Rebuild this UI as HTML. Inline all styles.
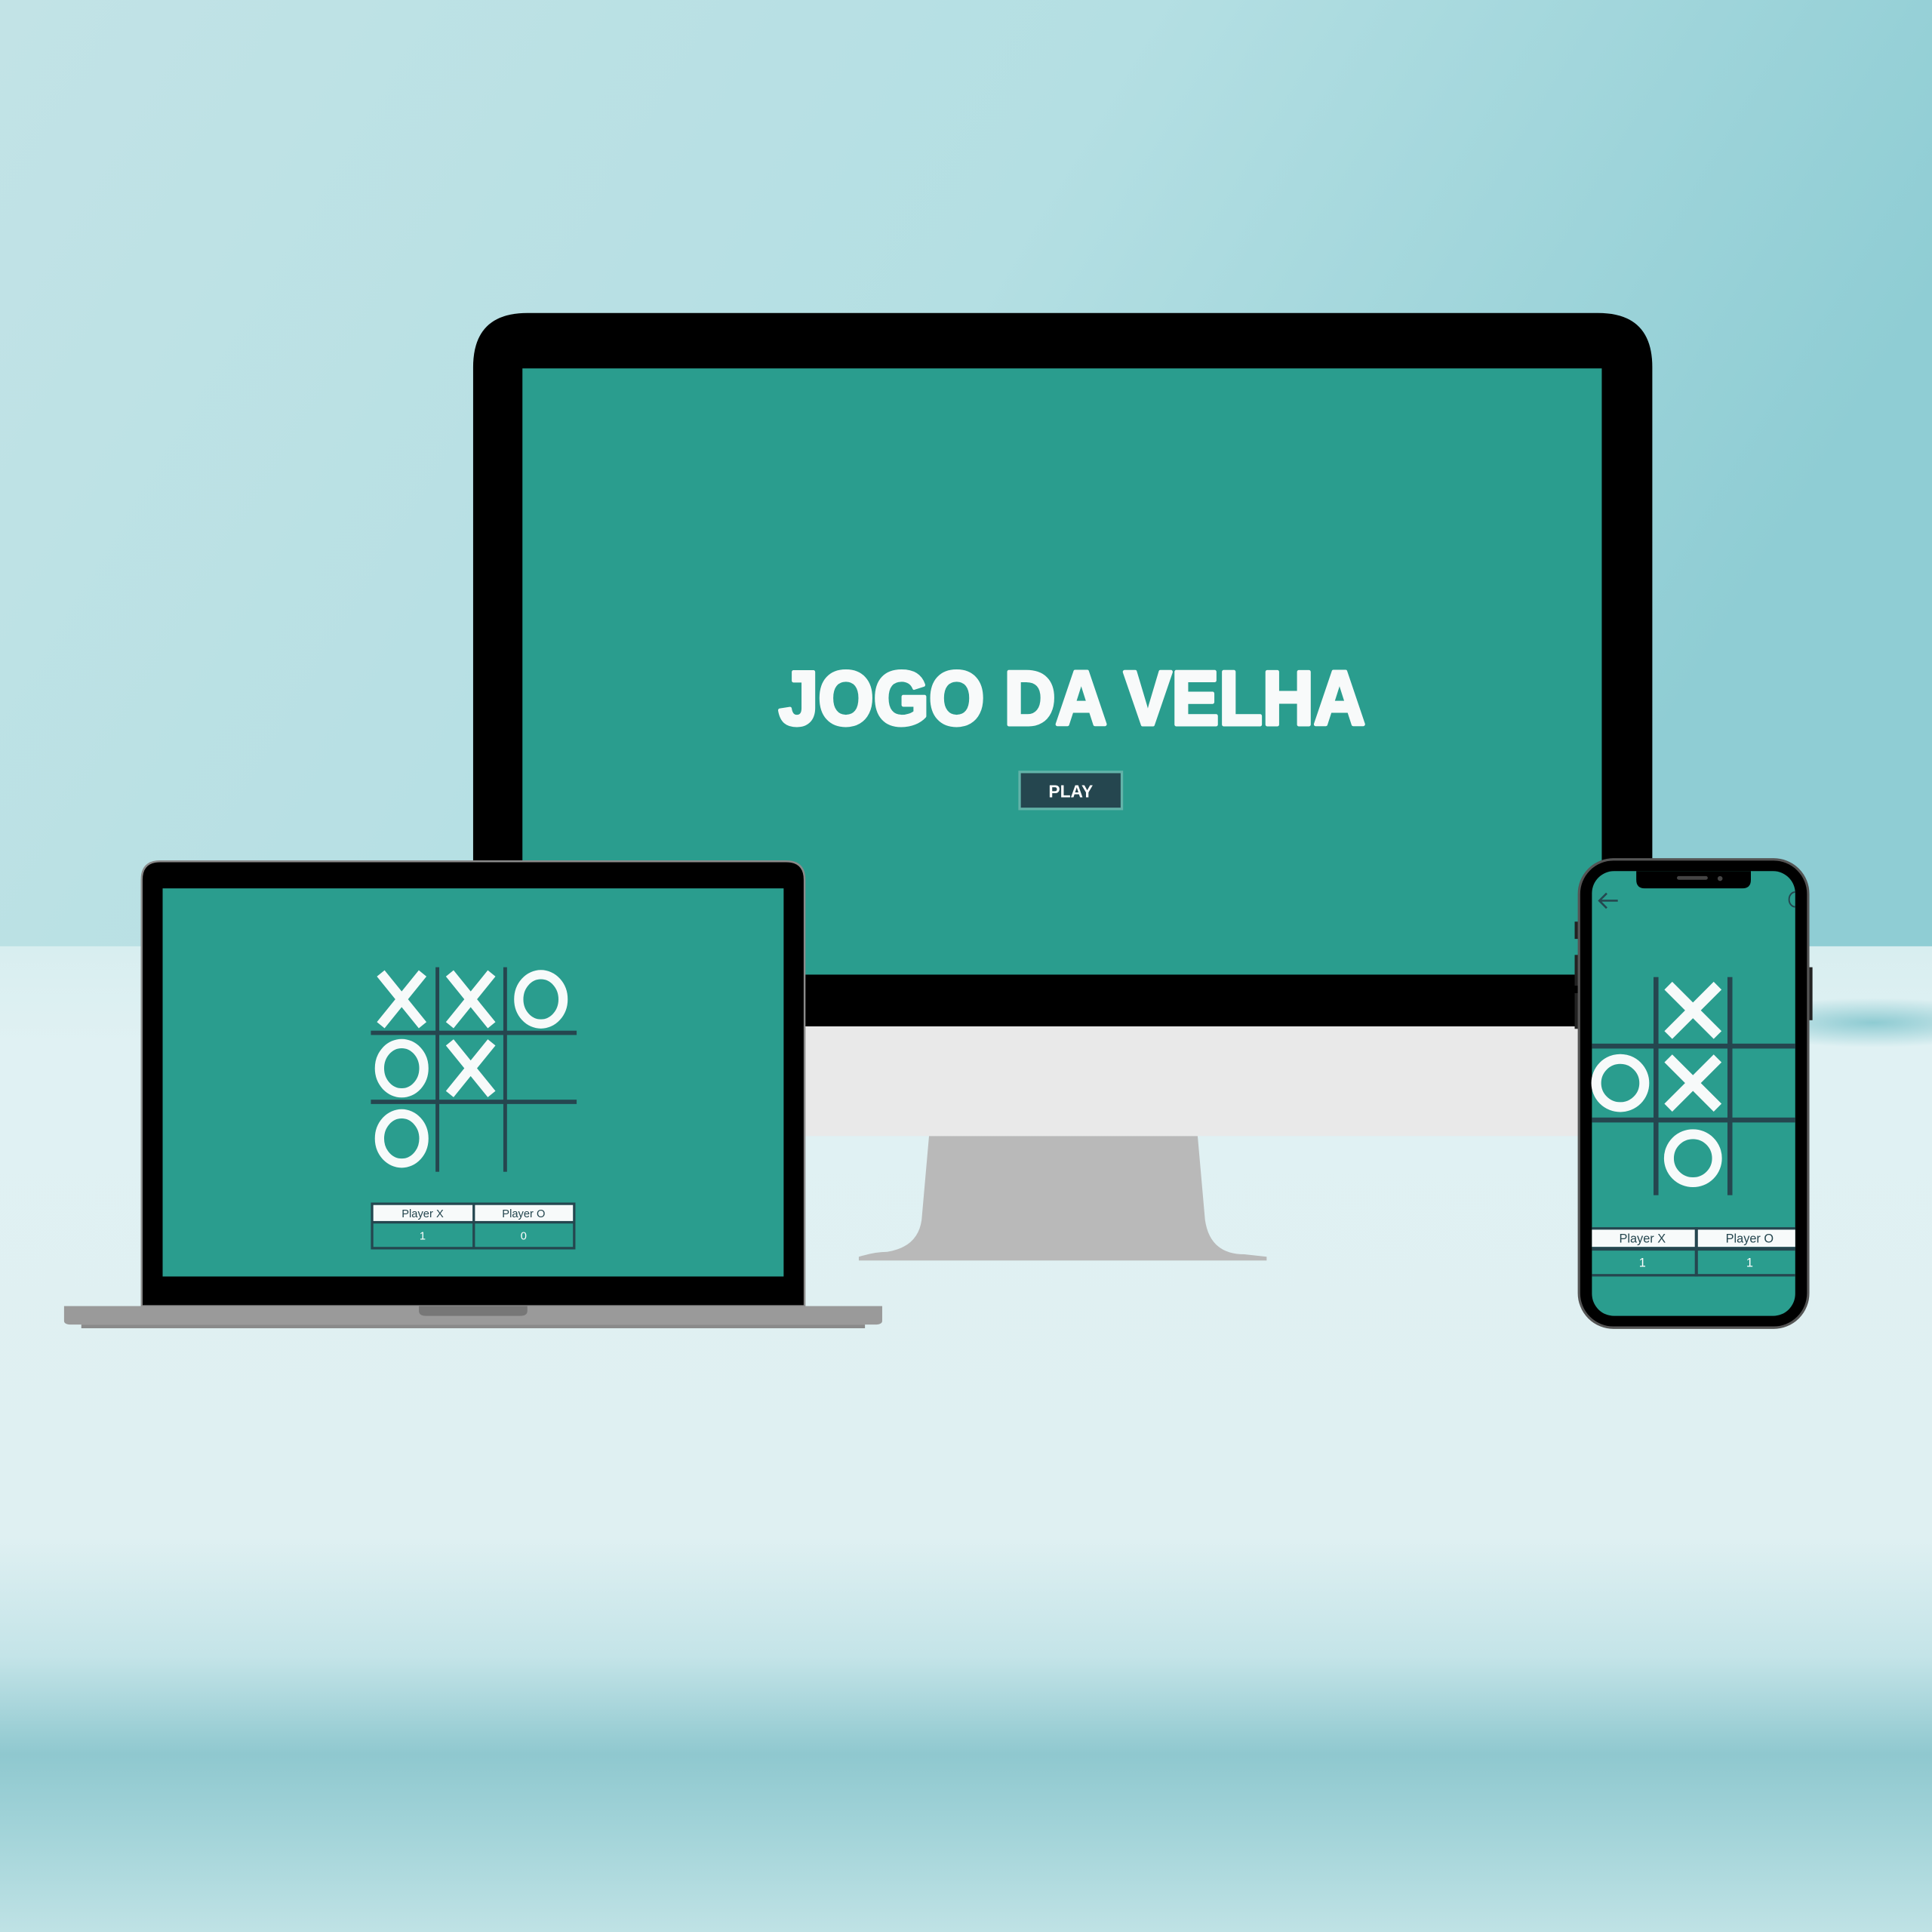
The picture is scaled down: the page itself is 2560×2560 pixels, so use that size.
<!DOCTYPE html>
<html><head><meta charset="utf-8"><style>html,body{margin:0;padding:0;width:2560px;height:2560px;overflow:hidden}svg{display:block}</style></head>
<body>
<svg width="2560" height="2560" viewBox="0 0 1568 1568" xmlns="http://www.w3.org/2000/svg">
<defs>
<linearGradient id="top" x1="0" y1="0" x2="1" y2="0.3"><stop offset="0" stop-color="#c2e3e6"/><stop offset="0.55" stop-color="#b4dfe3"/><stop offset="1" stop-color="#8fcdd4"/></linearGradient>
<linearGradient id="bot" x1="0" y1="0" x2="0" y2="1">
<stop offset="0" stop-color="#d8eef0"/><stop offset="0.1" stop-color="#e0f1f3"/><stop offset="0.6" stop-color="#dff0f2"/><stop offset="0.72" stop-color="#c4e4e8"/><stop offset="0.82" stop-color="#8fc8cf"/><stop offset="0.9" stop-color="#a3d4d9"/><stop offset="1" stop-color="#bfe2e5"/></linearGradient>
<radialGradient id="streak" cx="0.5" cy="0.5" r="0.5"><stop offset="0" stop-color="#8ecbd2"/><stop offset="1" stop-color="#8ecbd2" stop-opacity="0"/></radialGradient>
<g id="xl"><path d="M-17,-21L17,21M17,-21L-17,21" stroke="#f7fafa" stroke-width="8"/></g>
<g id="ol"><ellipse rx="18" ry="20" fill="none" stroke="#f7fafa" stroke-width="7.5"/></g>
<g id="xp"><path d="M-20,-20L20,20M20,-20L-20,20" stroke="#f7fafa" stroke-width="9"/></g>
<g id="op"><circle r="19.5" fill="none" stroke="#f7fafa" stroke-width="8"/></g>
</defs>
<rect width="1568" height="780" fill="url(#top)"/>
<rect y="768" width="1568" height="800" fill="url(#bot)"/>
<ellipse cx="1520" cy="830" rx="120" ry="20" fill="url(#streak)"/>

<!-- monitor -->
<path d="M754,922 L972,922 L978,990 Q982,1018 1010,1018 L1028,1020 L1028,1023 L697,1023 L697,1020 Q710,1016 720,1016 Q745,1012 748,990 Z" fill="#b9b9b9"/>
<rect x="384" y="833" width="957" height="89" fill="#e9e9e9"/>
<path d="M384,833 L384,298 Q384,254 428,254 L1297,254 Q1341,254 1341,298 L1341,833 Z" fill="#000"/>
<rect x="424" y="299" width="876" height="492" fill="#2a9d8e"/>
<text x="870" y="588" text-anchor="middle" textLength="476" lengthAdjust="spacingAndGlyphs" font-family="'Liberation Sans',sans-serif" font-weight="bold" font-size="62" fill="#f8fafa" stroke="#f8fafa" stroke-width="3" stroke-linejoin="round">JOGO DA VELHA</text>
<rect x="827.5" y="626.5" width="83" height="30" fill="#25464f" stroke="#62b3a9" stroke-width="2"/>
<text x="869" y="647" text-anchor="middle" font-family="'Liberation Sans',sans-serif" font-weight="bold" font-size="14" fill="#fff">PLAY</text>

<!-- laptop -->
<path d="M115,1060 L115,714 Q115,699 130,699 L638,699 Q653,699 653,714 L653,1060 Z" fill="#000" stroke="#8a8a8a" stroke-width="1.5"/>
<rect x="132" y="721" width="504" height="315" fill="#2a9d8e"/>
<path d="M52,1060 L716,1060 L716,1072 Q716,1075 710,1075 L58,1075 Q52,1075 52,1072 Z" fill="#9a9a9a"/>
<rect x="66" y="1075" width="636" height="3" fill="#8a8a8a"/>
<path d="M340,1060 L428,1060 L428,1064 Q428,1068 422,1068 L346,1068 Q340,1068 340,1064 Z" fill="#777"/>
<g fill="#25464f">
<rect x="353.5" y="785" width="3" height="166"/><rect x="408.5" y="785" width="3" height="166"/>
<rect x="301" y="836.5" width="167" height="3.5"/><rect x="301" y="892.5" width="167" height="3.5"/>
</g>
<use href="#xl" x="326" y="811"/><use href="#xl" x="382" y="811"/><use href="#ol" x="439" y="811"/>
<use href="#ol" x="326" y="867"/><use href="#xl" x="382" y="867"/>
<use href="#ol" x="326" y="924"/>
<rect x="302" y="977" width="164" height="36" fill="#2a9d8e" stroke="#25464f" stroke-width="2"/>
<rect x="303" y="978" width="162" height="13" fill="#f7fafa"/>
<rect x="302" y="991" width="164" height="2" fill="#25464f"/>
<rect x="383.5" y="977" width="2" height="36" fill="#25464f"/>
<g font-family="'Liberation Sans',sans-serif" font-size="9" text-anchor="middle">
<text x="343" y="988" fill="#25464f">Player X</text><text x="425" y="988" fill="#25464f">Player O</text>
<text x="343" y="1006" fill="#fff">1</text><text x="425" y="1006" fill="#fff">0</text></g>

<!-- phone -->
<rect x="1278" y="748" width="3" height="14" fill="#222"/><rect x="1278" y="775" width="3" height="25" fill="#222"/><rect x="1278" y="806" width="3" height="29" fill="#222"/>
<rect x="1467" y="785" width="4" height="43" fill="#222"/>
<rect x="1281.5" y="697.5" width="186" height="380" rx="28" fill="#000" stroke="#555" stroke-width="2"/>
<rect x="1292" y="707" width="165" height="361" rx="18" fill="#2a9d8e"/>
<path d="M1328,707 L1421,707 L1421,714 Q1421,721 1414,721 L1335,721 Q1328,721 1328,714 Z" fill="#000"/>
<rect x="1361" y="711" width="25" height="3" rx="1.5" fill="#444"/><circle cx="1396" cy="713" r="2" fill="#444"/>
<path d="M1313,731 L1298,731 M1304,725 L1298,731 L1304,737" stroke="#25464f" stroke-width="1.6" fill="none"/>
<path d="M1457,724 A5,6 0 0 0 1457,736" stroke="#25464f" stroke-width="1.2" fill="none"/>
<g fill="#25464f">
<rect x="1342" y="793" width="4" height="177"/><rect x="1402" y="793" width="4" height="177"/>
<rect x="1292" y="847" width="165" height="4"/><rect x="1292" y="907" width="165" height="4"/>
</g>
<use href="#xp" x="1374" y="820"/>
<use href="#op" x="1315" y="879"/><use href="#xp" x="1374" y="879"/>
<use href="#op" x="1374" y="940"/>
<rect x="1292" y="996" width="165" height="2" fill="#25464f"/>
<rect x="1292" y="998" width="165" height="14" fill="#f7fafa"/>
<rect x="1292" y="1012" width="165" height="3" fill="#25464f"/>
<rect x="1292" y="1034" width="165" height="2" fill="#25464f"/>
<rect x="1375.5" y="996" width="2.5" height="40" fill="#25464f"/>
<g font-family="'Liberation Sans',sans-serif" font-size="10" text-anchor="middle">
<text x="1333" y="1008.5" fill="#25464f">Player X</text><text x="1420" y="1008.5" fill="#25464f">Player O</text>
<text x="1333" y="1028" fill="#fff">1</text><text x="1420" y="1028" fill="#fff">1</text></g>
</svg>
</body></html>
